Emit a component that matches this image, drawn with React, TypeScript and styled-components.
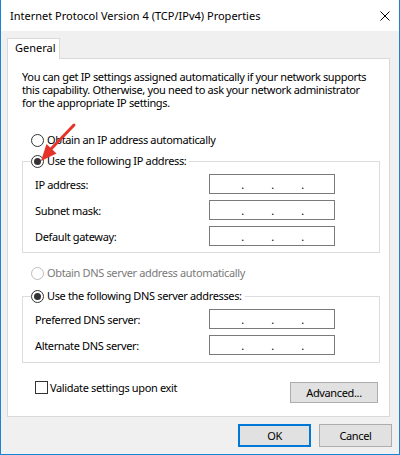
import React from "react";
import styled, { createGlobalStyle } from "styled-components";

const GlobalStyle = createGlobalStyle`
  html, body { margin: 0; padding: 0; background: #ffffff; }
  * { box-sizing: border-box; }
  body {
    font-family: "Noto Sans", "Open Sans", sans-serif;
    font-size: 11px;
    letter-spacing: -0.35px;
    color: #000;
  }
`;

const Window = styled.div`
  position: relative;
  width: 400px;
  height: 455px;
  border: 1px solid #1883d7;
  border-top: none;
  display: flex;
  flex-direction: column;
  background: #f0f0f0;
`;

const TitleBar = styled.div`
  height: 31px;
  flex: none;
  background: #ffffff;
  display: flex;
  align-items: center;
  justify-content: space-between;
  padding: 0 9px 0 9px;
`;

const Title = styled.span`
  font-size: 11px;
  letter-spacing: 0;
  line-height: 16px;
  white-space: nowrap;
`;

const CloseIcon = styled.svg`
  width: 10px;
  height: 10px;
  display: block;
`;

const Body = styled.div`
  flex: 1;
  display: flex;
  flex-direction: column;
  padding: 7px 7px 0 6px;
`;

const TabStrip = styled.div`
  display: flex;
`;

const Tab = styled.div`
  position: relative;
  z-index: 1;
  width: 53px;
  height: 21px;
  margin-bottom: -1px;
  padding: 0 0 0 7px;
  background: #ffffff;
  border: 1px solid #d9d9d9;
  border-bottom: none;
  line-height: 18px;
  letter-spacing: 0;
`;

const Panel = styled.div`
  height: 359px;
  margin-right: 2px;
  background: #ffffff;
  border: 1px solid #d9d9d9;
  display: flex;
  flex-direction: column;
  padding: 11px 0 0 0;
`;

const Description = styled.p`
  margin: 0 0 0 14px;
  line-height: 13px;
  white-space: nowrap;
`;

const RadioRow = styled.label<{ $top: number; $disabled?: boolean }>`
  display: flex;
  align-items: center;
  height: 14px;
  margin: ${(p) => p.$top}px 0 0 23px;
  color: ${(p) => (p.$disabled ? "#7a7a7a" : "#000")};
  line-height: 14px;
  gap: 3px;
  white-space: nowrap;
`;

const RadioGlyph = styled.span<{ $checked?: boolean; $disabled?: boolean }>`
  width: 13px;
  height: 13px;
  flex: none;
  border-radius: 50%;
  border: 1px solid ${(p) => (p.$disabled ? "#bcbcbc" : "#333333")};
  background: #ffffff;
  display: flex;
  align-items: center;
  justify-content: center;
  &::after {
    content: "";
    display: ${(p) => (p.$checked ? "block" : "none")};
    width: 7px;
    height: 7px;
    border-radius: 50%;
    background: #333333;
  }
`;

const Group = styled.fieldset<{ $top: number; $bottom: number }>`
  margin: ${(p) => p.$top}px 9px 0 14px;
  padding: 6px 0 ${(p) => p.$bottom}px 8px;
  border: 1px solid #dcdcdc;
  min-width: 0;
`;

const Legend = styled.legend`
  padding: 0 3px 0 0;
  height: 14px;
  line-height: 14px;
  display: flex;
  align-items: center;
  gap: 3px;
  white-space: nowrap;
`;

const Rows = styled.div`
  display: flex;
  flex-direction: column;
  gap: 6px;
  padding-left: 4px;
`;

const FieldRow = styled.div`
  display: flex;
  align-items: center;
  height: 20px;
`;

const FieldLabel = styled.span`
  width: 174px;
  flex: none;
  white-space: nowrap;
`;

const IpBox = styled.div`
  width: 126px;
  height: 20px;
  border: 1px solid #7a7a7a;
  background: #ffffff;
  display: flex;
  align-items: center;
  padding-left: 31px;
  gap: 27px;
  line-height: 14px;
`;

const Dot = styled.span`
  width: 3px;
  text-align: center;
  margin-top: 2px;
`;

const BottomRow = styled.div`
  display: flex;
  justify-content: space-between;
  align-items: flex-start;
  margin: 18px 11px 0 27px;
`;

const CheckRow = styled.label`
  display: flex;
  align-items: center;
  gap: 2px;
  height: 13px;
  line-height: 14px;
  white-space: nowrap;
`;

const CheckGlyph = styled.span`
  width: 13px;
  height: 13px;
  flex: none;
  border: 1px solid #333333;
  background: #ffffff;
`;

const Button = styled.button<{ $w: number; $h: number; $default?: boolean }>`
  width: ${(p) => p.$w}px;
  height: ${(p) => p.$h}px;
  padding: 0;
  margin: 0;
  font-family: inherit;
  font-size: 11px;
  letter-spacing: inherit;
  color: #000;
  background: #e1e1e1;
  border: ${(p) => (p.$default ? "2px solid #0078d7" : "1px solid #adadad")};
  line-height: 14px;
`;

const AdvancedButton = styled(Button)`
  margin-top: 1px;
`;

const Footer = styled.div`
  display: flex;
  justify-content: flex-end;
  gap: 8px;
  margin-top: 7px;
`;

const ArrowOverlay = styled.svg`
  position: absolute;
  left: 29px;
  top: 115px;
  width: 55px;
  height: 55px;
  pointer-events: none;
`;

function IpField() {
  return (
    <IpBox>
      <Dot>.</Dot>
      <Dot>.</Dot>
      <Dot>.</Dot>
    </IpBox>
  );
}

function Field({ label }: { label: string }) {
  return (
    <FieldRow>
      <FieldLabel>{label}</FieldLabel>
      <IpField />
    </FieldRow>
  );
}

export default function App() {
  return (
    <>
      <GlobalStyle />
      <Window>
        <TitleBar>
          <Title>Internet Protocol Version 4 (TCP/IPv4) Properties</Title>
          <CloseIcon viewBox="0 0 10 10">
            <path d="M0.5 0.5 L9.5 9.5 M9.5 0.5 L0.5 9.5" stroke="#000" strokeWidth="1" fill="none" />
          </CloseIcon>
        </TitleBar>
        <Body>
          <TabStrip>
            <Tab>General</Tab>
          </TabStrip>
          <Panel>
            <Description>
              You can get IP settings assigned automatically if your network supports
              <br />
              this capability. Otherwise, you need to ask your network administrator
              <br />
              for the appropriate IP settings.
            </Description>
            <RadioRow $top={24}>
              <RadioGlyph />
              Obtain an IP address automatically
            </RadioRow>
            <Group $top={7} $bottom={6}>
              <Legend>
                <RadioGlyph $checked />
                Use the following IP address:
              </Legend>
              <Rows>
                <Field label="IP address:" />
                <Field label="Subnet mask:" />
                <Field label="Default gateway:" />
              </Rows>
            </Group>
            <RadioRow $top={13} $disabled>
              <RadioGlyph $disabled />
              Obtain DNS server address automatically
            </RadioRow>
            <Group $top={9} $bottom={7}>
              <Legend>
                <RadioGlyph $checked />
                Use the following DNS server addresses:
              </Legend>
              <Rows>
                <Field label="Preferred DNS server:" />
                <Field label="Alternate DNS server:" />
              </Rows>
            </Group>
            <BottomRow>
              <CheckRow>
                <CheckGlyph />
                Validate settings upon exit
              </CheckRow>
              <AdvancedButton $w={88} $h={21}>Advanced...</AdvancedButton>
            </BottomRow>
          </Panel>
          <Footer>
            <Button $w={73} $h={23} $default>OK</Button>
            <Button $w={73} $h={23}>Cancel</Button>
          </Footer>
        </Body>
        <ArrowOverlay viewBox="0 0 55 55">
          <line x1="44" y1="10" x2="21" y2="34" stroke="#e5332a" strokeWidth="3" strokeLinecap="round" />
          <polygon points="11,46 26.5,38.5 16.5,29" fill="#e5332a" />
        </ArrowOverlay>
      </Window>
    </>
  );
}
